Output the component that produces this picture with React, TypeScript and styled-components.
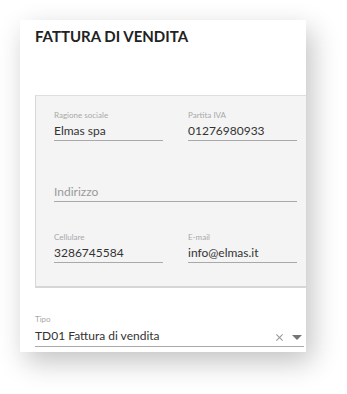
import styled, { createGlobalStyle } from 'styled-components';

const GlobalStyle = createGlobalStyle`
  html, body {
    margin: 0;
    padding: 0;
    background: #ffffff;
  }
  body {
    font-family: 'Lato', 'Noto Sans', sans-serif;
  }
`;

interface FieldProps {
  label?: string;
  value?: string;
  placeholder?: string;
}

const Field = (props: FieldProps) => {
  return (
    <FieldBox>
      <Label>{props.label || '\u00a0'}</Label>
      <InputLine>
        {props.value ? <Value>{props.value}</Value> : <Placeholder>{props.placeholder}</Placeholder>}
      </InputLine>
    </FieldBox>
  );
};

const App = () => {
  return (
    <Page>
      <GlobalStyle />
      <Card>
        <Title>FATTURA DI VENDITA</Title>
        <Panel>
          <Row>
            <Field label="Ragione sociale" value="Elmas spa" />
            <Field label="Partita IVA" value="01276980933" />
          </Row>
          <Row>
            <Field placeholder="Indirizzo" />
          </Row>
          <Row>
            <Field label="Cellulare" value="3286745584" />
            <Field label="E-mail" value="info@elmas.it" />
          </Row>
        </Panel>
        <SelectBox>
          <Label>Tipo</Label>
          <SelectLine>
            <Value>TD01 Fattura di vendita</Value>
            <Icons>
              <svg width="9" height="9" viewBox="0 0 10 10">
                <path d="M1.5 1.5 L8.5 8.5 M8.5 1.5 L1.5 8.5" stroke="#9a9a9a" strokeWidth="1.2" />
              </svg>
              <svg width="10" height="6" viewBox="0 0 10 6">
                <path d="M0 0 H10 L5 5 Z" fill="#757575" />
              </svg>
            </Icons>
          </SelectLine>
        </SelectBox>
      </Card>
    </Page>
  );
};

export default App;

const Page = styled.div`
  width: 347px;
  height: 394px;
  padding: 20px 0 0 20px;
  box-sizing: border-box;
`;

const Card = styled.div`
  width: 286px;
  height: 332px;
  background: #ffffff;
  box-shadow: 6px 10px 26px rgba(0, 0, 0, 0.24);
  overflow: hidden;
  padding-left: 15px;
  box-sizing: border-box;
  display: flex;
  flex-direction: column;
`;

const Title = styled.h1`
  margin: 6px 0 0 0;
  font-size: 15px;
  line-height: 20px;
  font-weight: 700;
  color: #222222;
`;

const Panel = styled.div`
  margin-top: 49px;
  width: 290px;
  box-sizing: border-box;
  background: #f4f4f4;
  border-top: 1px solid #dedede;
  border-left: 1px solid #d8d8d8;
  border-bottom: 2px solid #d6d6d6;
  padding: 14px 0 23px 18px;
  display: flex;
  flex-direction: column;
  gap: 30px;
`;

const Row = styled.div`
  display: flex;
  gap: 25px;
  width: 243px;
`;

const FieldBox = styled.div`
  flex: 1;
  display: flex;
  flex-direction: column;
`;

const Label = styled.div`
  font-size: 8px;
  line-height: 11px;
  color: #a8a8a8;
`;

const InputLine = styled.div`
  height: 19px;
  border-bottom: 1px solid #a9a9a9;
  display: flex;
  align-items: center;
`;

const Value = styled.span`
  font-size: 12px;
  color: #333333;
`;

const Placeholder = styled.span`
  font-size: 12px;
  color: #9a9a9a;
`;

const SelectBox = styled.div`
  margin-top: 26px;
  width: 269px;
  display: flex;
  flex-direction: column;
`;

const SelectLine = styled.div`
  height: 21px;
  border-bottom: 1px solid #a9a9a9;
  display: flex;
  align-items: center;
  justify-content: space-between;
`;

const Icons = styled.div`
  display: flex;
  align-items: center;
  gap: 8px;
  margin-top: 4px;
  padding-right: 2px;
`;
